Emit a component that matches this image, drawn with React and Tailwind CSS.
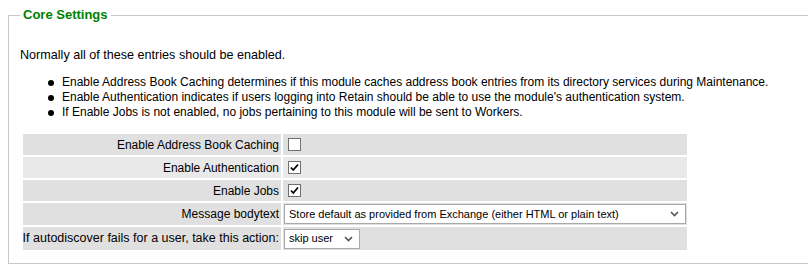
import React from "react";

function Check({ checked }) {
  return (
    <div className="w-[13px] h-[13px] border border-[#707070] bg-white flex items-center justify-center">
      {checked && (
        <svg width="9" height="9" viewBox="0 0 9 9">
          <path d="M1 4.5 L3.3 7 L8 1.5" fill="none" stroke="#000" strokeWidth="1.8" />
        </svg>
      )}
    </div>
  );
}

function Select({ text, width }) {
  return (
    <div
      className={`h-[20px] border border-[#a9a9a9] bg-white flex items-center justify-between pl-[4px] pr-[6px] text-[11px] text-black ${width}`}
    >
      <span className="whitespace-nowrap">{text}</span>
      <svg width="9" height="6" viewBox="0 0 9 6">
        <path d="M1 1 L4.5 4.5 L8 1" fill="none" stroke="#555" strokeWidth="1.6" />
      </svg>
    </div>
  );
}

function Row({ label, children, light, labelClass = "" }) {
  return (
    <div className="flex gap-[2px]">
      <div
        className={`w-[258px] flex items-center justify-end pr-[2px] whitespace-nowrap ${labelClass} ${light ? "bg-[#e9e9e9]" : "bg-[#e0e0e0]"}`}
      >
        {label}
      </div>
      <div
        className={`w-[404px] flex items-center pl-[5px] ${light ? "bg-[#e9e9e9]" : "bg-[#e0e0e0]"}`}
      >
        {children}
      </div>
    </div>
  );
}

function Bullet({ children }) {
  return (
    <li className="flex items-start">
      <span className="w-[14px] h-[15px] shrink-0 flex items-center">
        <span className="w-[6px] h-[6px] rounded-full bg-black" />
      </span>
      <span>{children}</span>
    </li>
  );
}

export default function App() {
  return (
    <div
      className="w-[808px] h-[278px] overflow-hidden bg-white text-[12px] text-black"
      style={{ fontFamily: "Tahoma, 'Liberation Sans', Arial, sans-serif" }}
    >
      <div className="pt-[7px] pl-[8px]">
        <fieldset className="w-[840px] h-[257px] border border-[#c8c8c8] pl-[11px] m-0">
          <legend className="px-[3px] text-[13px] text-[#008000] font-bold leading-[16px]">
            Core Settings
          </legend>
          <div className="mt-[24px] leading-[16px] text-[12.6px]">Normally all of these entries should be enabled.</div>
          <ul className="mt-[12px] pl-[28px] leading-[15px]">
            <Bullet>Enable Address Book Caching determines if this module caches address book entries from its directory services during Maintenance.</Bullet>
            <Bullet>Enable Authentication indicates if users logging into Retain should be able to use the module's authentication system.</Bullet>
            <Bullet>If Enable Jobs is not enabled, no jobs pertaining to this module will be sent to Workers.</Bullet>
          </ul>
          <div className="mt-[14px] ml-[3px] flex flex-col gap-[2px]">
            <div className="h-[21px] flex">
              <Row label="Enable Address Book Caching">
                <Check checked={false} />
              </Row>
            </div>
            <div className="h-[21px] flex">
              <Row label="Enable Authentication" light>
                <Check checked />
              </Row>
            </div>
            <div className="h-[21px] flex">
              <Row label="Enable Jobs">
                <Check checked />
              </Row>
            </div>
            <div className="h-[22px] flex">
              <Row label="Message bodytext">
                <div className="-ml-[4px]">
                  <Select
                    width="w-[402px]"
                    text="Store default as provided from Exchange (either HTML or plain text)"
                  />
                </div>
              </Row>
            </div>
            <div className="h-[23px] flex">
              <Row label="If autodiscover fails for a user, take this action:" labelClass="text-[12.5px]">
                <div className="-ml-[4px]">
                  <Select width="w-[76px]" text="skip user" />
                </div>
              </Row>
            </div>
          </div>
        </fieldset>
      </div>
    </div>
  );
}
